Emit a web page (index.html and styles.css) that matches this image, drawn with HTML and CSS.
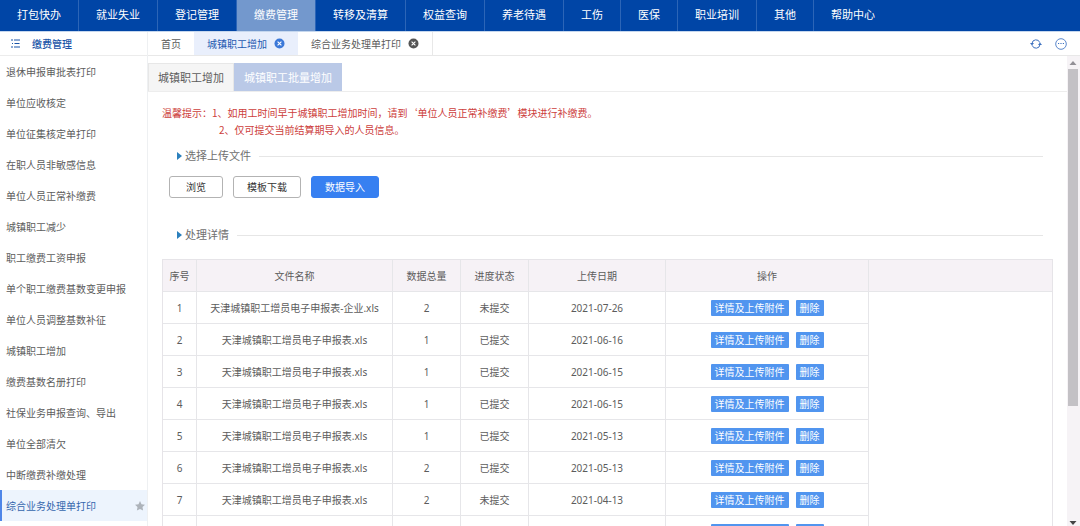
FILE: index.html
```html
<!DOCTYPE html>
<html lang="zh-CN">
<head>
<meta charset="utf-8">
<title>缴费管理</title>
<link rel="stylesheet" href="styles.css">
</head>
<body>
<nav class="topnav">
  <a href="#">打包快办</a><a href="#">就业失业</a><a href="#">登记管理</a><a href="#" class="active">缴费管理</a><a href="#">转移及清算</a><a href="#">权益查询</a><a href="#">养老待遇</a><a href="#">工伤</a><a href="#">医保</a><a href="#">职业培训</a><a href="#">其他</a><a href="#">帮助中心</a>
</nav>
<div class="layout">
  <aside class="sidebar">
    <h2 class="sidebar-title">
      <svg class="list-icon" viewBox="0 0 9 9" aria-hidden="true"><path d="M0 1h2M3 1h6M1 4.500h1M3.500 4.500h5M0 8h2M3 8h6" stroke="currentColor" fill="none"/></svg>
      缴费管理
    </h2>
    <a href="#">退休申报审批表打印</a>
    <a href="#">单位应收核定</a>
    <a href="#">单位征集核定单打印</a>
    <a href="#">在职人员非敏感信息</a>
    <a href="#">单位人员正常补缴费</a>
    <a href="#">城镇职工减少</a>
    <a href="#">职工缴费工资申报</a>
    <a href="#">单个职工缴费基数变更申报</a>
    <a href="#">单位人员调整基数补征</a>
    <a href="#">城镇职工增加</a>
    <a href="#">缴费基数名册打印</a>
    <a href="#">社保业务申报查询、导出</a>
    <a href="#">单位全部清欠</a>
    <a href="#">中断缴费补缴处理</a>
    <a href="#" class="active">综合业务处理单打印
      <svg class="star" viewBox="0 0 10 10" aria-hidden="true"><path d="M5 0l1.500 3.200 3.500.5-2.500 2.400.6 3.500L5 8 1.900 9.600l.6-3.500L0 3.700l3.500-.5z" fill="#adb3ba"/></svg>
    </a>
  </aside>
  <main class="main">
    <div class="tabbar">
      <a href="#" class="tab">首页</a>
      <a href="#" class="tab current">城镇职工增加
        <svg class="close" viewBox="0 0 11 11" aria-hidden="true"><circle cx="5.500" cy="5.500" r="5" fill="#3b78d8"/><path d="M3.600 3.600l3.800 3.800M7.400 3.600L3.600 7.400" stroke="#fff" stroke-width="1.100"/></svg>
      </a>
      <a href="#" class="tab last">综合业务处理单打印
        <svg class="close" viewBox="0 0 11 11" aria-hidden="true"><circle cx="5.500" cy="5.500" r="5" fill="#555"/><path d="M3.600 3.600l3.800 3.800M7.400 3.600L3.600 7.400" stroke="#fff" stroke-width="1.100"/></svg>
      </a>
      <div class="tools">
        <button type="button" aria-label="刷新"><svg class="refresh" viewBox="0 0 12 12" aria-hidden="true"><path d="M2 5.500A4 4 0 0 1 9.800 4.600M10 6.500A4 4 0 0 1 2.200 7.400" fill="none" stroke="#3f72c0"/><path d="M0 5h4L2 7.600zM12 7H8l2-2.600z" fill="#3f72c0"/></svg></button>
        <button type="button" aria-label="更多"><svg class="more" viewBox="0 0 12 12" aria-hidden="true"><circle cx="6" cy="6" r="5.300" fill="none" stroke="#4a7bc6" stroke-width=".9"/><path d="M3 5.500h1.200M5.400 5.500h1.200M7.800 5.500H9" stroke="#3f72c0"/></svg></button>
      </div>
    </div>
    <div class="viewport">
      <div class="page">
        <div class="subtabs">
          <button type="button">城镇职工增加</button><button type="button" class="on">城镇职工批量增加</button>
        </div>
        <div class="content">
          <div class="notice">
            <p>温馨提示：1、如用工时间早于城镇职工增加时间，请到‘单位人员正常补缴费’模块进行补缴费。</p>
            <p class="indent">2、仅可提交当前结算期导入的人员信息。</p>
          </div>
          <h3 class="section">选择上传文件</h3>
          <div class="actions">
            <button type="button">浏览</button>
            <button type="button">模板下载</button>
            <button type="button" class="primary">数据导入</button>
          </div>
          <h3 class="section">处理详情</h3>
          <table class="grid">
            <colgroup><col class="c-no"><col class="c-name"><col class="c-num"><col class="c-num"><col class="c-date"><col class="c-op"><col></colgroup>
            <thead><tr><th>序号</th><th>文件名称</th><th>数据总量</th><th>进度状态</th><th>上传日期</th><th>操作</th><th></th></tr></thead>
            <tbody>
              <tr><td>1</td><td>天津城镇职工增员电子申报表-企业.xls</td><td>2</td><td>未提交</td><td>2021-07-26</td><td><div class="ops"><button type="button">详情及上传附件</button><button type="button">删除</button></div></td><td></td></tr>
              <tr><td>2</td><td>天津城镇职工增员电子申报表.xls</td><td>1</td><td>已提交</td><td>2021-06-16</td><td><div class="ops"><button type="button">详情及上传附件</button><button type="button">删除</button></div></td><td></td></tr>
              <tr><td>3</td><td>天津城镇职工增员电子申报表.xls</td><td>1</td><td>已提交</td><td>2021-06-15</td><td><div class="ops"><button type="button">详情及上传附件</button><button type="button">删除</button></div></td><td></td></tr>
              <tr><td>4</td><td>天津城镇职工增员电子申报表.xls</td><td>1</td><td>已提交</td><td>2021-06-15</td><td><div class="ops"><button type="button">详情及上传附件</button><button type="button">删除</button></div></td><td></td></tr>
              <tr><td>5</td><td>天津城镇职工增员电子申报表.xls</td><td>1</td><td>已提交</td><td>2021-05-13</td><td><div class="ops"><button type="button">详情及上传附件</button><button type="button">删除</button></div></td><td></td></tr>
              <tr><td>6</td><td>天津城镇职工增员电子申报表.xls</td><td>2</td><td>已提交</td><td>2021-05-13</td><td><div class="ops"><button type="button">详情及上传附件</button><button type="button">删除</button></div></td><td></td></tr>
              <tr><td>7</td><td>天津城镇职工增员电子申报表.xls</td><td>2</td><td>未提交</td><td>2021-04-13</td><td><div class="ops"><button type="button">详情及上传附件</button><button type="button">删除</button></div></td><td></td></tr>
              <tr><td></td><td></td><td></td><td></td><td></td><td><div class="ops"><button type="button" aria-label="详情及上传附件" class="wide"></button><button type="button" aria-label="删除" class="narrow"></button></div></td><td></td></tr>
            </tbody>
          </table>
        </div>
      </div>
      <div class="scrollbar" aria-hidden="true">
        <svg class="arrow" viewBox="0 0 12 13"><path d="M2.500 9h7L6 5z" fill="#929096"/></svg>
        <div class="track"><div class="thumb"></div></div>
        <svg class="arrow" viewBox="0 0 12 13"><path d="M2.500 8h7L6 12z" fill="#444"/></svg>
      </div>
    </div>
  </main>
</div>
</body>
</html>
```

FILE: styles.css
```css
* { box-sizing: border-box; }

body {
  margin: 0;
  height: 100vh;
  display: flex;
  flex-direction: column;
  overflow: hidden;
  font: 10px/16px "Noto Sans", "Noto Sans CJK SC", sans-serif;
  color: #5c5c5c;
  background: #fff;
}

a { color: inherit; text-decoration: none; white-space: nowrap; }
button { font: inherit; color: inherit; border: 0; padding: 0; background: none; white-space: nowrap; }
svg { display: block; flex: none; }
h2, h3, p { margin: 0; font-weight: 400; }

.topnav {
  display: flex;
  flex: none;
  height: 32px;
  background: #0045a6;
  color: #fff;
  font-size: 11px;
  line-height: 30px;
  border-bottom: 1px solid #c5d7ee;
}
.topnav a { padding: 0 17px; border-right: 1px solid #2c65b7; }
.topnav a:last-child { border-right: 0; }
.topnav .active { background: #7398cd; }

.layout { display: flex; flex: 1; min-height: 0; }

.sidebar {
  flex: none;
  width: 148px;
  border-right: 1px solid #eef0f2;
  overflow: hidden;
}
.sidebar-title {
  display: flex;
  align-items: center;
  gap: 12px;
  height: 24px;
  padding-left: 11px;
  border-bottom: 1px solid #ececec;
  color: #1a55a8;
  font-size: 10px;
  font-weight: 500;
}
.list-icon { width: 9px; height: 9px; }
.sidebar a {
  display: flex;
  align-items: center;
  justify-content: space-between;
  height: 31px;
  padding: 0 2px 0 6px;
}
.sidebar .active {
  padding-left: 4px;
  border-left: 2px solid #4f86e8;
  background: #edf4fd;
  color: #3567ad;
}
.star { width: 10px; height: 10px; }

.main { flex: 1; min-width: 0; display: flex; flex-direction: column; }

.tabbar {
  display: flex;
  flex: none;
  height: 24px;
  border-bottom: 1px solid #e8e8e8;
}
.tab { display: flex; align-items: center; gap: 7px; padding: 0 13px; }
.tab.current { background: #e9effc; color: #1f58b0; }
.tab.last { border-right: 1px solid #e8e8e8; }
.close { width: 11px; height: 11px; }
.tools { display: flex; align-items: center; gap: 13px; margin-left: auto; padding-right: 13px; }
.refresh, .more { width: 12px; height: 12px; }

.viewport { flex: 1; min-height: 0; display: flex; }
.page { flex: 1; min-width: 0; overflow: hidden; }

.subtabs { display: flex; padding-top: 7px; border-bottom: 1px solid #ededed; }
.subtabs button {
  height: 28px;
  padding: 0 9px;
  border: 1px solid #e7e7e7;
  border-bottom: 0;
  background: #f5f5f5;
  font-size: 11px;
}
.subtabs .on { background: #bac9e7; border-color: #bac9e7; color: #fff; }

.content { padding: 12px 14px 0; }
.notice {
  padding-bottom: 1px;
  line-height: 17px;
  color: #cd403c;
  font-family: "Noto Sans CJK SC", sans-serif;
}
.notice .indent { padding-left: 57px; }

.section {
  display: flex;
  align-items: center;
  height: 18px;
  margin: 8px 10px 0 15px;
  font-size: 11px;
  color: #707070;
}
.section::before {
  content: "";
  margin-right: 3px;
  border: 4px solid transparent;
  border-left: 5px solid #2b80bd;
  border-right: 0;
}
.section::after { content: ""; flex: 1; height: 1px; margin-left: 8px; background: #e6e6e6; }

.actions { display: flex; gap: 10px; padding: 11px 7px 20px; }
.actions button {
  height: 22px;
  min-width: 54px;
  padding: 0 13px;
  border: 1px solid #b3b3b3;
  border-radius: 3px;
  color: #333;
}
.actions .primary { background: #3780f1; border-color: #3780f1; color: #fff; }

.grid {
  width: 100%;
  margin-top: 15px;
  table-layout: fixed;
  border-collapse: separate;
  border-spacing: 0;
  border: 1px solid #e6e4e8;
  text-align: center;
}
.c-no { width: 34px; }
.c-name { width: 196px; }
.c-num { width: 68px; }
.c-date { width: 137px; }
.c-op { width: 203px; }
.grid th, .grid td {
  height: 32px;
  padding: 0;
  border-right: 1px solid #e6e6e9;
  border-bottom: 1px solid #e6e6e9;
  font-weight: 400;
}
.grid th { background: #f6f2f6; }
.grid th:last-child, .grid td:last-child { border-right: 0; }
.grid td:last-child { border-bottom: 0; }

.ops { display: flex; justify-content: center; gap: 7px; }
.ops button {
  height: 16px;
  padding: 0 4px;
  border-radius: 1px;
  background: #5195ef;
  color: #fff;
}
.ops .wide { width: 78px; }
.ops .narrow { width: 28px; }

.scrollbar {
  flex: none;
  width: 13px;
  display: flex;
  flex-direction: column;
  padding-right: 1px;
  background: #f6f3f6;
}
.arrow { width: 12px; height: 13px; }
.track { flex: 1; padding: 0 1px; }
.thumb { height: 76%; background: #c3c1c5; }
```
